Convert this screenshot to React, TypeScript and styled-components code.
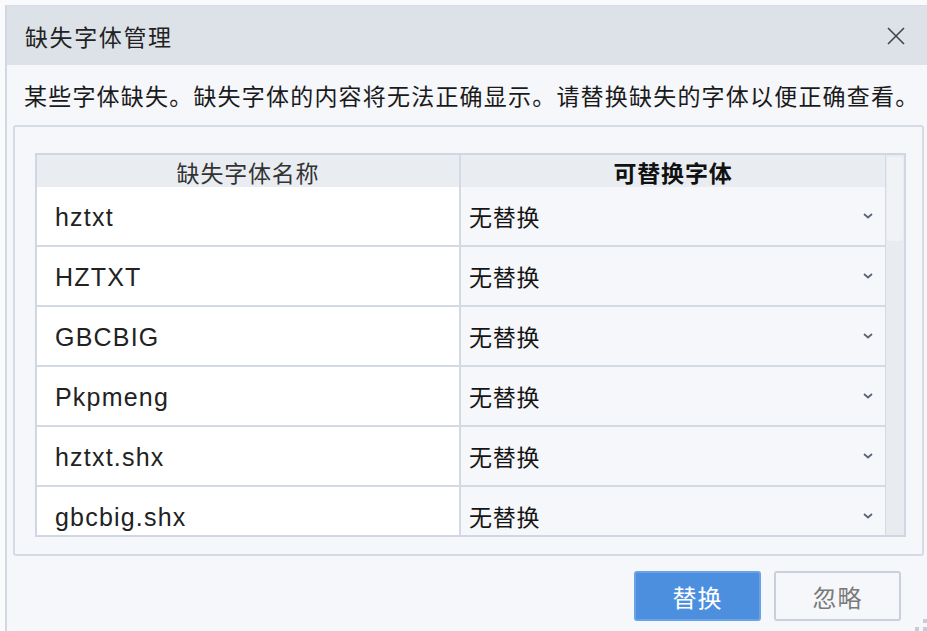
import styled, { createGlobalStyle } from 'styled-components';

const GlobalStyle = createGlobalStyle`
    html, body {
        margin: 0;
        padding: 0;
        background: #f9fafb;
        overflow: hidden;
    }
    body {
        font-family: "Liberation Sans", "Noto Sans CJK SC", sans-serif;
        color: #1c1c1c;
    }
`;

const Dialog = styled.div`
    position: relative;
    margin: 5px 0 0 5px;
    width: 922px;
    height: 626px;
    box-sizing: border-box;
    border-left: 2px solid #d2d8e2;
    border-top: 1px solid #d6dce5;
    background: #f5f7fa;
    display: flex;
    flex-direction: column;
`;

const TitleBar = styled.div`
    height: 59px;
    flex-shrink: 0;
    display: flex;
    align-items: center;
    justify-content: space-between;
    padding: 0 19px 0 18px;
    background: #dde2e9;
`;

const Title = styled.span`
    font-size: 23px;
    letter-spacing: 1.6px;
    color: #222;
`;

const CloseButton = styled.button`
    border: none;
    background: transparent;
    padding: 0;
    width: 24px;
    height: 24px;
    display: flex;
    align-items: center;
    justify-content: center;
    cursor: pointer;
`;

const Description = styled.p`
    margin: 0;
    height: 60px;
    display: flex;
    align-items: center;
    padding-left: 17px;
    font-size: 23px;
    letter-spacing: 1.2px;
    white-space: nowrap;
    color: #1a1a1a;
`;

const GroupBox = styled.div`
    margin-left: 6px;
    width: 911px;
    height: 431px;
    box-sizing: border-box;
    border: 2px solid #d5dbe4;
    border-radius: 3px;
    padding: 26px 16px 0 20px;
`;

const Table = styled.div`
    display: flex;
    height: 384px;
    box-sizing: border-box;
    border: 2px solid #d0d7e2;
    background: #d3dae4;
    overflow: hidden;
`;

const TableMain = styled.div`
    flex: 1;
    display: flex;
    flex-direction: column;
    gap: 2px;
`;

const HeaderRow = styled.div`
    display: grid;
    grid-template-columns: 422px 1fr;
    gap: 2px;
    height: 30px;
    flex-shrink: 0;
`;

const HeaderCell = styled.div<{ $bold?: boolean }>`
    background: #e9edf2;
    display: flex;
    align-items: center;
    justify-content: center;
    font-size: 23px;
    letter-spacing: 0.8px;
    font-weight: ${p => (p.$bold ? 700 : 400)};
    color: ${p => (p.$bold ? '#111' : '#333')};
`;

const Row = styled.div`
    display: grid;
    grid-template-columns: 422px 1fr;
    gap: 2px;
    height: 58px;
    flex-shrink: 0;
`;

const NameCell = styled.div`
    background: #fff;
    display: flex;
    align-items: center;
    padding: 2px 0 0 18px;
    font-size: 25px;
    letter-spacing: 1.2px;
    color: #222;
`;

const SelectCell = styled.div`
    background: #f5f7fa;
    display: flex;
    align-items: center;
    justify-content: space-between;
    padding: 0 12px 0 8px;
    font-size: 23px;
    letter-spacing: 0.8px;
    color: #151515;
`;

const ScrollTrack = styled.div`
    width: 18px;
    flex-shrink: 0;
    margin-left: 1px;
    background: #e8ecf1;
    padding: 2px 1px;
    box-sizing: border-box;
`;

const ScrollThumb = styled.div`
    height: 84px;
    border-radius: 3px;
    background: #f0f2f6;
`;

const ButtonRow = styled.div`
    display: flex;
    justify-content: flex-end;
    gap: 13px;
    padding: 15px 26px 0 0;
`;

const Button = styled.button<{ $primary?: boolean }>`
    width: 127px;
    height: 50px;
    box-sizing: border-box;
    border-radius: 3px;
    border: 2px solid ${p => (p.$primary ? '#6aa2e6' : '#c9d0da')};
    background: ${p => (p.$primary ? '#4d8fdf' : '#f5f7fa')};
    color: ${p => (p.$primary ? '#fff' : '#7a7a7a')};
    font-family: "Noto Sans CJK SC", sans-serif;
    font-size: 24px;
    letter-spacing: 1px;
    cursor: pointer;
`;

const Grip = styled.div`
    position: absolute;
    right: 0;
    bottom: 0;
    width: 12px;
    height: 12px;
    background:
        linear-gradient(#c7cdd6, #c7cdd6) 8px 0 / 4px 4px no-repeat,
        linear-gradient(#c7cdd6, #c7cdd6) 0 8px / 4px 4px no-repeat,
        linear-gradient(#c7cdd6, #c7cdd6) 8px 8px / 4px 4px no-repeat;
`;

const fonts = ['hztxt', 'HZTXT', 'GBCBIG', 'Pkpmeng', 'hztxt.shx', 'gbcbig.shx'];

function Chevron() {
    return (
        <svg width="10" height="6" viewBox="0 0 10 6">
            <path d="M1 1 L5 4.5 L9 1" fill="none" stroke="#5b6473" strokeWidth="1.8" />
        </svg>
    );
}

function CloseIcon() {
    return (
        <svg width="20" height="20" viewBox="0 0 20 20">
            <path d="M2 2 L18 18 M18 2 L2 18" stroke="#444" strokeWidth="1.6" />
        </svg>
    );
}

export default function App() {
    return (
        <>
            <GlobalStyle />
            <Dialog>
                <TitleBar>
                    <Title>缺失字体管理</Title>
                    <CloseButton aria-label="关闭">
                        <CloseIcon />
                    </CloseButton>
                </TitleBar>

                <Description>某些字体缺失。缺失字体的内容将无法正确显示。请替换缺失的字体以便正确查看。</Description>

                <GroupBox>
                    <Table>
                        <TableMain>
                            <HeaderRow>
                                <HeaderCell>缺失字体名称</HeaderCell>
                                <HeaderCell $bold>可替换字体</HeaderCell>
                            </HeaderRow>
                            {fonts.map(name => (
                                <Row key={name}>
                                    <NameCell>{name}</NameCell>
                                    <SelectCell>
                                        <span>无替换</span>
                                        <Chevron />
                                    </SelectCell>
                                </Row>
                            ))}
                        </TableMain>
                        <ScrollTrack>
                            <ScrollThumb />
                        </ScrollTrack>
                    </Table>
                </GroupBox>

                <ButtonRow>
                    <Button $primary>替换</Button>
                    <Button>忽略</Button>
                </ButtonRow>

                <Grip />
            </Dialog>
        </>
    );
}
